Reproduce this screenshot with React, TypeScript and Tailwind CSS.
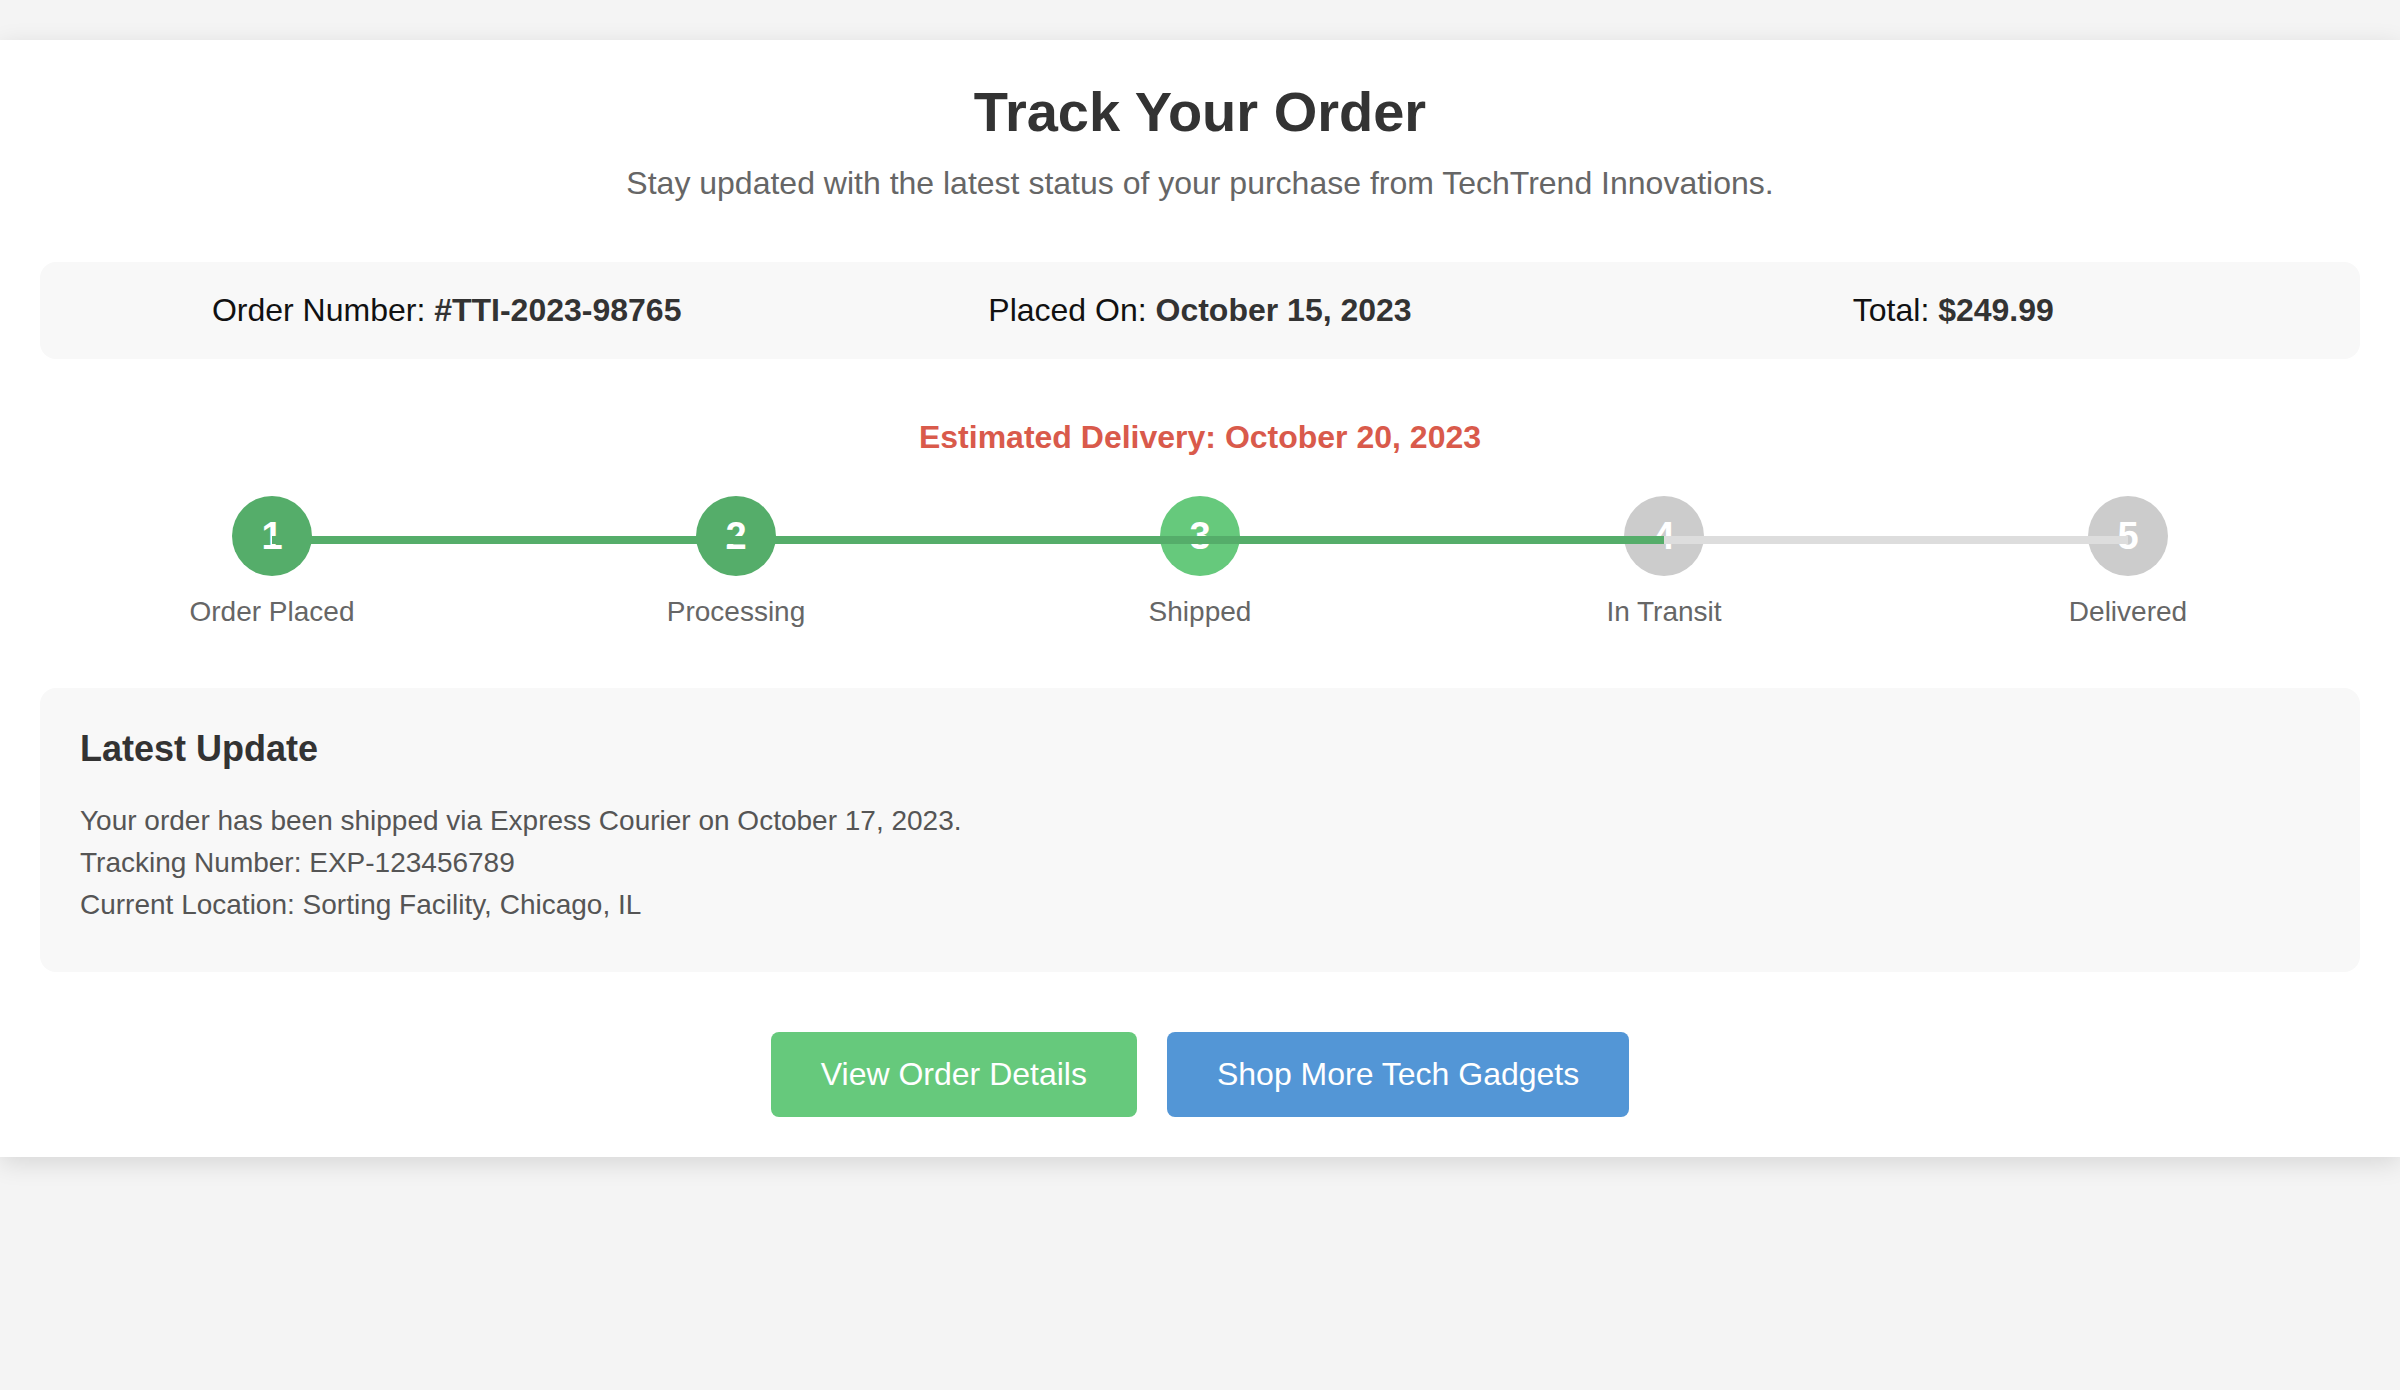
import React from "react";

const STEPS = [
  { n: 1, label: "Order Placed", state: "done" },
  { n: 2, label: "Processing", state: "done" },
  { n: 3, label: "Shipped", state: "active" },
  { n: 4, label: "In Transit", state: "todo" },
  { n: 5, label: "Delivered", state: "todo" },
];

const PROGRESS = 75;

function circleClass(state: string) {
  if (state === "done") return "bg-[#55ad6a]";
  if (state === "active") return "bg-[#66c97c]";
  return "bg-[#cccccc]";
}

function Tracker() {
  return (
    <div className="relative">
      <div className="flex">
        {STEPS.map((s) => (
          <div key={s.n} className="flex flex-1 flex-col items-center">
            <div
              className={`flex h-[80px] w-[80px] items-center justify-center rounded-full text-[38px] font-bold text-white ${circleClass(s.state)}`}
            >
              {s.n}
            </div>
            <div className="mt-[20px] text-[28px] leading-[32px] text-[#666]">{s.label}</div>
          </div>
        ))}
      </div>
      {/* progress line sits over the circles */}
      <div className="absolute left-[10%] right-[10%] top-[40px] z-10 h-[8px] bg-[#dddddd]">
        <div className="h-full bg-[#55ad6a]" style={{ width: `${PROGRESS}%` }} />
      </div>
    </div>
  );
}

export default function App() {
  return (
    <div
      className="min-h-[1390px] bg-[#f4f4f4] pt-[40px] text-[#333]"
      style={{ fontFamily: '"Liberation Sans", Arial, Helvetica, sans-serif' }}
    >
      <div className="w-full bg-white px-[40px] pb-[40px] pt-[40px] shadow-[0_6px_24px_rgba(0,0,0,0.12)]">
        {/* Header */}
        <h1 className="mb-[21px] text-center text-[56px] font-bold leading-[64px] text-[#333]">
          Track Your Order
        </h1>
        <p className="text-center text-[32px] leading-[37px] text-[#666]">
          Stay updated with the latest status of your purchase from TechTrend Innovations.
        </p>

        {/* Order summary */}
        <div className="mt-[60px] grid grid-cols-3 rounded-[16px] bg-[#f8f8f8] p-[30px] text-center text-[32px] leading-[37px] text-[#111]">
          <div>
            Order Number: <span className="font-bold text-[#333]">#TTI-2023-98765</span>
          </div>
          <div>
            Placed On: <span className="font-bold text-[#333]">October 15, 2023</span>
          </div>
          <div>
            Total: <span className="font-bold text-[#333]">$249.99</span>
          </div>
        </div>

        <p className="mt-[60px] text-center text-[32px] font-bold leading-[37px] text-[#d95a4b]">
          Estimated Delivery: October 20, 2023
        </p>

        <div className="mt-[40px]">
          <Tracker />
        </div>

        {/* Latest update */}
        <div className="mt-[60px] rounded-[16px] bg-[#f8f8f8] px-[40px] pb-[46px] pt-[40px]">
          <h2 className="mb-[30px] text-[36px] font-bold leading-[42px] text-[#333]">Latest Update</h2>
          <div className="text-[28px] leading-[42px] text-[#555]">
            <p>Your order has been shipped via Express Courier on October 17, 2023.</p>
            <p>Tracking Number: EXP-123456789</p>
            <p>Current Location: Sorting Facility, Chicago, IL</p>
          </div>
        </div>

        {/* Actions */}
        <div className="mt-[60px] flex justify-center gap-[30px]">
          <button className="rounded-[8px] bg-[#66c97c] px-[50px] py-[24px] text-[32px] leading-[37px] text-white">
            View Order Details
          </button>
          <button className="rounded-[8px] bg-[#5396d6] px-[50px] py-[24px] text-[32px] leading-[37px] text-white">
            Shop More Tech Gadgets
          </button>
        </div>
      </div>
    </div>
  );
}
